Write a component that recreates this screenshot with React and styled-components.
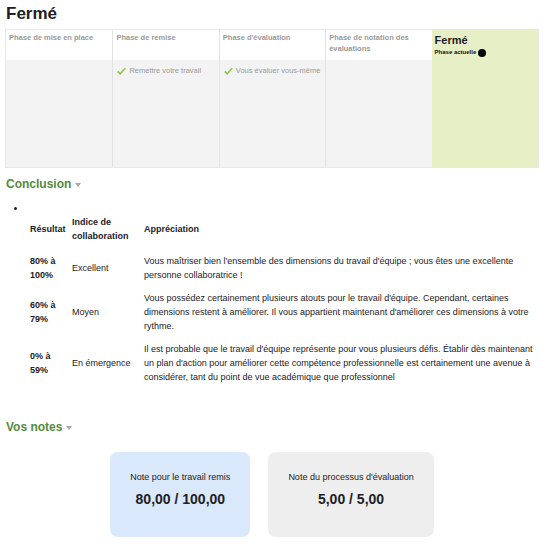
import React from "react";
import styled, { createGlobalStyle } from "styled-components";

const GlobalStyle = createGlobalStyle`
  body {
    margin: 0;
    font-family: "Liberation Sans", Arial, sans-serif;
    color: #1d2125;
    background: #ffffff;
  }
`;

const phases = [
  { title: "Phase de mise en place", tasks: [] },
  { title: "Phase de remise", tasks: ["Remettre votre travail"] },
  { title: "Phase d'évaluation", tasks: ["Vous évaluer vous-même"] },
  { title: "Phase de notation des évaluations", tasks: [] },
];

const rows = [
  {
    result: "80% à 100%",
    index: "Excellent",
    text: "Vous maîtriser bien l'ensemble des dimensions du travail d'équipe ; vous êtes une excellente personne collaboratrice !",
  },
  {
    result: "60% à 79%",
    index: "Moyen",
    text: "Vous possédez certainement plusieurs atouts pour le travail d'équipe. Cependant, certaines dimensions restent à améliorer. Il vous appartient maintenant d'améliorer ces dimensions à votre rythme.",
  },
  {
    result: "0% à 59%",
    index: "En émergence",
    text: "Il est probable que le travail d'équipe représente pour vous plusieurs défis. Établir dès maintenant un plan d'action pour améliorer cette compétence professionnelle est certainement une avenue à considérer, tant du point de vue académique que professionnel",
  },
];

const Check = () => (
  <svg width="9" height="8" viewBox="0 0 12 10">
    <path d="M1 5.5 L4.3 8.8 L11 1.2" fill="none" stroke="#8dc43f" strokeWidth="2" strokeLinejoin="round" />
  </svg>
);

export default function App() {
  return (
    <Page>
      <GlobalStyle />
      <Title>Fermé</Title>

      <PhaseGrid>
        {phases.map((p) => (
          <PhaseColumn key={p.title}>
            <PhaseHeader>{p.title}</PhaseHeader>
            <PhaseBody>
              {p.tasks.map((t) => (
                <Task key={t}>
                  <Check />
                  {t}
                </Task>
              ))}
            </PhaseBody>
          </PhaseColumn>
        ))}
        <ActiveColumn>
          <ActiveTitle>Fermé</ActiveTitle>
          <ActiveLabel>
            Phase actuelle <Dot />
          </ActiveLabel>
        </ActiveColumn>
      </PhaseGrid>

      <SectionTitle>
        Conclusion <Caret />
      </SectionTitle>

      <List>
        <li>
          <MarkerLine />
          <Table>
            <colgroup>
              <col style={{ width: 42 }} />
              <col style={{ width: 72 }} />
              <col />
            </colgroup>
            <thead>
              <tr>
                <Th>Résultat</Th>
                <Th>Indice de collaboration</Th>
                <Th>Appréciation</Th>
              </tr>
            </thead>
            <tbody>
              {rows.map((r) => (
                <tr key={r.result}>
                  <Td $bold>{r.result}</Td>
                  <Td>{r.index}</Td>
                  <Td>{r.text}</Td>
                </tr>
              ))}
            </tbody>
          </Table>
        </li>
      </List>

      <SectionTitle $top={32}>
        Vos notes <Caret />
      </SectionTitle>

      <Cards>
        <Card $bg="#d9e8fb">
          <CardLabel>Note pour le travail remis</CardLabel>
          <CardValue>80,00 / 100,00</CardValue>
        </Card>
        <Card $bg="#eeeeee">
          <CardLabel>Note du processus d'évaluation</CardLabel>
          <CardValue>5,00 / 5,00</CardValue>
        </Card>
      </Cards>
    </Page>
  );
}

const Page = styled.div`
  padding: 4px 7px 0 5px;
`;

const Title = styled.h2`
  margin: 0 0 0 1px;
  font-size: 17px;
  line-height: 20px;
  font-weight: 700;
  color: #1d2125;
`;

const PhaseGrid = styled.div`
  margin-top: 5px;
  display: grid;
  grid-template-columns: repeat(5, 1fr);
  height: 139px;
  border: 1px solid #e8e8e8;
  box-sizing: border-box;
`;

const PhaseColumn = styled.div`
  display: flex;
  flex-direction: column;
  & + & {
    border-left: 1px solid #e2e2e2;
  }
`;

const PhaseHeader = styled.div`
  height: 30px;
  box-sizing: border-box;
  padding: 3px 3px 0;
  font-size: 7.5px;
  line-height: 10.5px;
  font-weight: 700;
  color: #9a9a9a;
  background: #ffffff;
`;

const PhaseBody = styled.div`
  flex: 1;
  background: #f3f3f3;
  padding: 6px 4px;
`;

const Task = styled.div`
  display: flex;
  align-items: center;
  gap: 3px;
  font-size: 7.5px;
  line-height: 10px;
  color: #9a9a9a;
`;

const ActiveColumn = styled.div`
  background: #e7efc6;
  padding: 3px 3px;
`;

const ActiveTitle = styled.div`
  font-size: 11px;
  line-height: 14px;
  font-weight: 700;
  color: #1d2125;
`;

const ActiveLabel = styled.div`
  display: flex;
  align-items: center;
  gap: 2px;
  margin-top: 1px;
  font-size: 6px;
  line-height: 9px;
  font-weight: 700;
  color: #111;
`;

const Dot = styled.span`
  width: 8px;
  height: 8px;
  border-radius: 50%;
  background: #000;
`;

const SectionTitle = styled.h3`
  margin: ${(p) => p.$top ?? 9}px 0 0 1px;
  display: flex;
  align-items: center;
  gap: 4px;
  font-size: 12px;
  line-height: 15px;
  font-weight: 700;
  color: #538b3b;
`;

const Caret = styled.span`
  width: 0;
  height: 0;
  border-left: 3.5px solid transparent;
  border-right: 3.5px solid transparent;
  border-top: 4px solid #a8a8a8;
  margin-top: 1px;
`;

const List = styled.ul`
  margin: 10px 0 0;
  padding-left: 21px;
  font-size: 9px;
  line-height: 12px;
`;

const MarkerLine = styled.span`
  display: inline-block;
  height: 10px;
  vertical-align: top;
`;

const Table = styled.table`
  width: 100%;
  table-layout: fixed;
  border-collapse: collapse;
  font-size: 9px;
  line-height: 14px;
  color: #1d2125;
`;

const Th = styled.th`
  text-align: left;
  font-weight: 700;
  padding: 0.5px 4px 6.5px;
  vertical-align: middle;
`;

const Td = styled.td`
  padding: 4.5px 4px;
  vertical-align: middle;
  font-weight: ${(p) => (p.$bold ? 700 : 400)};
`;

const Cards = styled.div`
  display: flex;
  justify-content: center;
  gap: 18px;
  margin-top: 17px;
`;

const Card = styled.div`
  background: ${(p) => p.$bg};
  border-radius: 8px;
  padding: 19px 20px 29px;
  text-align: center;
`;

const CardLabel = styled.div`
  font-size: 9px;
  line-height: 12px;
  color: #1d2125;
`;

const CardValue = styled.div`
  margin-top: 8px;
  font-size: 14px;
  line-height: 17px;
  font-weight: 700;
  color: #1d2125;
`;
